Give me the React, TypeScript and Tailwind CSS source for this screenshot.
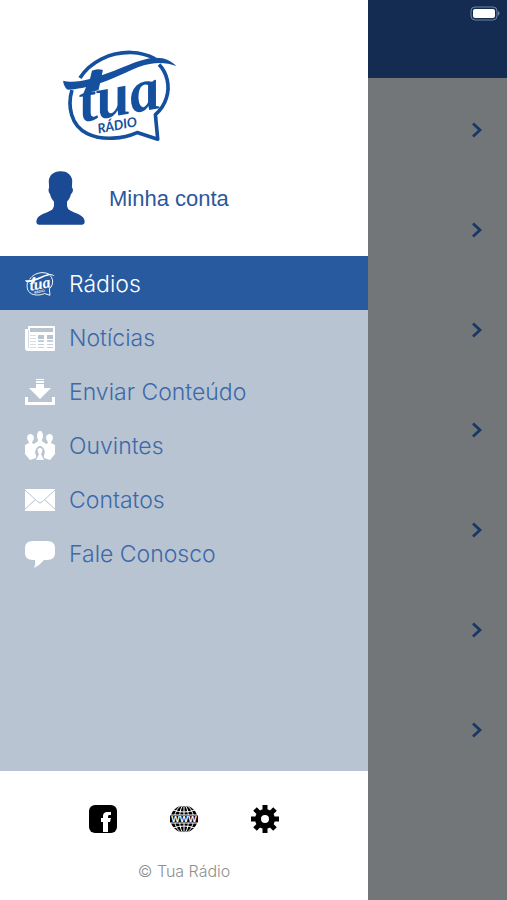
import React, { useState, type ReactNode } from "react";

function TuaRadioLogo({ className }: { className?: string }) {
  return (
    <svg viewBox="36 30 346 276" className={className} aria-hidden="true">
      <g fill="none" stroke="currentColor" strokeWidth="11" strokeLinejoin="round">
        <path d="M90 114C120 65 180 36 244 37C272 38 294 44 316 56" />
        <path d="M328 73C352 98 362 138 350 174C344 194 333 210 317 224L324 298L262 278C222 296 160 304 112 281C62 256 52 198 66 150" />
      </g>
      <path
        fill="currentColor"
        d="M40 122C62 129 92 124 122 116C190 98 244 66 296 55C334 48 362 58 380 78C354 69 330 65 300 72C252 80 208 112 150 130C112 142 78 149 54 149C46 146 38 128 40 122Z"
      />
      <path fill="currentColor" d="M126 92Q142 84 159 90L146 150L110 160Z" />
      <g fill="currentColor">
        <text
          x="96"
          y="246"
          fontSize="184"
          transform="rotate(-10 96 246)"
          className="font-['Liberation_Serif',serif] font-bold italic"
        >
          tua
        </text>
        <text
          x="146"
          y="281"
          fontSize="40"
          transform="rotate(-11 146 281)"
          className="font-[Lato,sans-serif] font-bold italic"
        >
          RÁDIO
        </text>
      </g>
    </svg>
  );
}

function PersonIcon() {
  return (
    <svg viewBox="50 34 146 161" className="h-[54px] w-[49px] text-[#1b4a94]" fill="currentColor" aria-hidden="true">
      <path d="M122 35C140 34 156 44 158 62L157 84C162 86 161 98 154 103C152 112 148 119 143 124C141 138 143 147 152 152C168 161 186 164 192 175C197 184 196 192 188 194H58C50 192 49 184 54 175C60 164 78 161 94 152C103 147 105 138 103 124C98 119 94 112 92 103C87 98 86 88 89 84L88 64C90 46 102 36 122 35Z" />
    </svg>
  );
}

function NewsIcon() {
  return (
    <svg viewBox="0 0 30 25" className="h-[25px] w-[30px]" aria-hidden="true">
      <path fill="#fff" d="M4 0H29Q30 0 30 1V24Q30 25 29 25H3Q0 25 0 22V3H3V1Q3 0 4 0Z" />
      <path fill="#b8c4d1" d="M5 2H28V6H5ZM13 9H19V13H13ZM22 9H28V13H22Z" />
      <path fill="#d5dce4" d="M3 4H4V22H3ZM5 9H11V10H5ZM5 12H11V13H5ZM5 15H11V16H5ZM5 18H11V19H5ZM5 21H11V22H5Z" />
      <path fill="#c6cfd9" d="M13 14H19V16H13ZM13 18H19V19H13ZM13 21H19V22H13ZM22 14H28V16H22ZM22 18H28V19H22ZM22 21H28V22H22Z" />
    </svg>
  );
}

function SendIcon() {
  return (
    <svg viewBox="0 0 30 28" className="h-[28px] w-[30px]" fill="#fff" aria-hidden="true">
      <path d="M11 1H19V2H11ZM11 3H19V5H11ZM11 6H19V10H26L15 21L4 10H11Z" />
      <path d="M0 19H3V24H27V19H30V26Q30 27 29 27H1Q0 27 0 26Z" />
    </svg>
  );
}

function ListenersIcon() {
  return (
    <svg viewBox="0 0 30 30" className="h-[30px] w-[30px]" fill="#fff" aria-hidden="true">
      <path d="M15 0C17 0 18 2 18 5C18 7 17 8 17 10L21 13L23 12C23 10 21 9 21 7C21 4 23 3 24.500 3C26 3 28 4 28 7C28 9 26 10 26 12L30 14V23L25 29L19 27V24C21 22 19 15 15 15C11 15 9 22 11 24V27L5 29L0 23V14L4 12C4 10 2 9 2 7C2 4 4 3 5.500 3C7 3 9 4 9 7C9 9 7 10 7 12L9 13L13 10C13 8 12 7 12 5C12 2 13 0 15 0Z" />
      <path d="M15 17C18 17 18 20 16 23L19 29H11L14 23C12 20 12 17 15 17Z" />
    </svg>
  );
}

function MailIcon() {
  return (
    <svg viewBox="0 0 30 22" className="h-[22px] w-[30px]" aria-hidden="true">
      <rect width="30" height="22" fill="#fff" />
      <path
        d="M0 1L13 13Q15 15 17 13L30 1M0 20L10 11M30 20L20 11"
        fill="none"
        stroke="#b8c4d1"
      />
    </svg>
  );
}

function ChatIcon() {
  return (
    <svg viewBox="0 0 30 27" className="h-[27px] w-[30px]" fill="#fff" aria-hidden="true">
      <path d="M8 0H22Q30 0 30 7V12Q30 19 22 19H19Q15 24 9 27Q11 23 10 19H8Q0 19 0 12V7Q0 0 8 0Z" />
    </svg>
  );
}

function FacebookIcon() {
  return (
    <svg viewBox="0 0 28 28" className="size-7" aria-hidden="true">
      <rect width="28" height="28" rx="6" />
      <path fill="#fff" d="M14 27V17H12V13H14V11C14 8 16 7 18 7H22V10H20Q19 10 19 12V13H22L21 17H19V27Z" />
    </svg>
  );
}

function GlobeIcon() {
  return (
    <svg viewBox="0 0 28 28" className="size-7" aria-hidden="true">
      <circle cx="14" cy="14" r="13.500" />
      <g fill="none" stroke="#fff">
        <path d="M14 0V28M3 5Q14 9 25 5M3 23Q14 19 25 23" />
        <ellipse cx="14" cy="14" rx="4.500" ry="14" />
        <ellipse cx="14" cy="14" rx="9.500" ry="14" />
      </g>
      <path d="M0 10H28V18H0Z" />
      <path d="M0 10H28M0 18H28" stroke="#fff" />
      <text
        x="14"
        y="17"
        fontSize="9"
        fill="#fff"
        textAnchor="middle"
        className="font-['Liberation_Sans',sans-serif] font-bold"
      >
        WWW
      </text>
    </svg>
  );
}

function GearIcon() {
  return (
    <svg viewBox="0 0 28 28" className="size-7" aria-hidden="true">
      <g stroke="#000" strokeWidth="5">
        <path d="M14 0V7M14 21V28M0 14H7M21 14H28M4 4L9 9M19 19L24 24M24 4L19 9M9 19L4 24" />
      </g>
      <circle cx="14" cy="14" r="7" fill="none" stroke="#000" strokeWidth="6" />
    </svg>
  );
}

function BatteryIcon() {
  return (
    <svg viewBox="0 0 31 15" className="h-[15px] w-[31px]" aria-hidden="true">
      <rect x="1" y="1" width="26" height="13" rx="4" fill="none" stroke="#7483a0" />
      <rect x="3" y="3" width="22" height="9" rx="2" fill="#fff" />
      <path d="M28 5Q31 7 28 10Z" fill="#7483a0" />
    </svg>
  );
}

function Chevron() {
  return (
    <svg viewBox="0 0 10 16" className="h-4 w-[10px]" fill="none" aria-hidden="true">
      <path d="M1 1.500L8 8L1 14.500" stroke="#173765" strokeWidth="2.800" />
    </svg>
  );
}

const menu: { label: string; icon: ReactNode }[] = [
  { label: "Rádios", icon: <TuaRadioLogo className="h-6 w-[30px] text-white" /> },
  { label: "Notícias", icon: <NewsIcon /> },
  { label: "Enviar Conteúdo", icon: <SendIcon /> },
  { label: "Ouvintes", icon: <ListenersIcon /> },
  { label: "Contatos", icon: <MailIcon /> },
  { label: "Fale Conosco", icon: <ChatIcon /> },
];

const links = [
  { label: "Facebook", icon: <FacebookIcon /> },
  { label: "Site", icon: <GlobeIcon /> },
  { label: "Configurações", icon: <GearIcon /> },
];

const stations = [1, 2, 3, 4, 5, 6, 7];

export default function App() {
  const [active, setActive] = useState("Rádios");

  return (
    <div className="flex min-h-screen font-['Liberation_Sans',Arial,sans-serif]">
      <aside className="flex w-[72.6%] shrink-0 flex-col bg-white">
        <header className="flex h-64 flex-col items-start pt-[50px]">
          <TuaRadioLogo className="ml-[62px] h-[92px] w-[115px] text-[#15509e]" />
          <a href="#conta" className="mt-[29px] flex items-center gap-6 pl-9 text-[22px] text-[#2b579c]">
            <PersonIcon />
            Minha conta
          </a>
        </header>

        <nav className="flex-1 bg-[#b8c4d1]">
          {menu.map((item) => (
            <button
              key={item.label}
              type="button"
              onClick={() => setActive(item.label)}
              className={
                "flex h-[54px] w-full items-center gap-[14px] pl-[25px] pt-0.5 text-left font-[Inter,sans-serif] text-[23px] font-light " +
                (item.label === active ? "bg-[#285a9f] text-white" : "text-[#3d69aa]")
              }
            >
              {item.icon}
              {item.label}
            </button>
          ))}
        </nav>

        <footer className="flex h-[129px] flex-col items-center pt-[34px]">
          <div className="flex gap-[53px]">
            {links.map((link) => (
              <a key={link.label} href="#" aria-label={link.label}>
                {link.icon}
              </a>
            ))}
          </div>
          <p className="mt-[26px] font-[Inter,sans-serif] text-base font-light text-[#8f8f8f]">© Tua Rádio</p>
        </footer>
      </aside>

      <main className="flex-1 bg-[#737679]">
        <div className="flex h-[78px] justify-end bg-[#152c52] pr-[6px] pt-[6px]">
          <BatteryIcon />
        </div>
        <ul>
          {stations.map((id) => (
            <li key={id} className="flex h-[100px] items-center justify-end border-b border-[#717477] pr-[25px] pt-1">
              <button type="button" aria-label={"Abrir rádio " + id}>
                <Chevron />
              </button>
            </li>
          ))}
        </ul>
      </main>
    </div>
  );
}
